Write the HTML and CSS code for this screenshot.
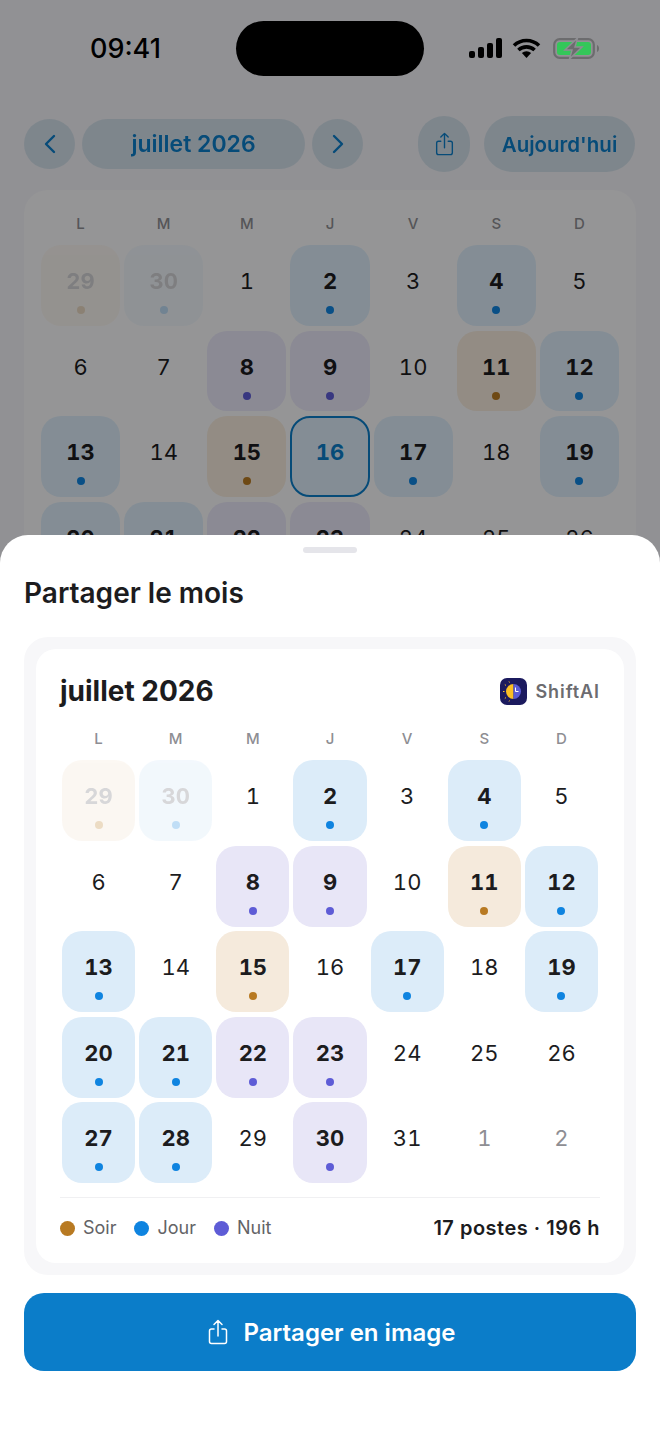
FILE: index.html
```html
<!DOCTYPE html>
<html lang="fr">
<head>
  <meta charset="UTF-8" />
  <title>ShiftAI – Partager le mois</title>
  <link rel="stylesheet" href="styles.css">
</head>
<body>
  <div class="screen">
    <header class="status-bar">
      <span class="status-time">09:41</span>
      <div class="island"></div>
      <div class="status-icons">
        <svg width="33" height="20" viewBox="0 0 33 20"><rect x="0" y="13" width="6" height="7" rx="2"/><rect x="9" y="9" width="6" height="11" rx="2"/><rect x="18" y="5" width="6" height="15" rx="2"/><rect x="27" y="0" width="6" height="20" rx="2"/></svg>
        <svg width="29" height="20" viewBox="0 0 29 20"><path d="M14.5 20l-4.6-5a6.6 6.6 0 0 1 9.2 0z"/><path d="M2 7.5a18 18 0 0 1 25 0M6.4 12a12 12 0 0 1 16.2 0" fill="none" stroke="#000" stroke-width="3.6"/></svg>
        <svg class="battery" width="46" height="21" viewBox="0 0 46 21"><rect x="1.2" y="1.2" width="39.6" height="18.6" rx="5.5" fill="none" stroke="#6c6c6e" stroke-width="2.2"/><rect x="4" y="4" width="34" height="13" rx="3" fill="#34c759"/><path d="M44 7v7c1.2-.4 2-1.800 2-3.500S45.200 7.400 44 7z" fill="#6c6c6e"/><path d="M24.500 0L12 12h7l-2.500 9L29 9h-7z" fill="#6c6c6e" stroke="#8e8e93" stroke-width="1.500"/></svg>
      </div>
    </header>

    <div class="toolbar">
      <button class="tool round"><svg width="14" height="20" viewBox="0 0 14 20"><path d="M11 2L3 10l8 8"/></svg></button>
      <button class="tool month">juillet 2026</button>
      <button class="tool round"><svg width="14" height="20" viewBox="0 0 14 20"><path d="M3 2l8 8-8 8"/></svg></button>
      <button class="tool round tall push"><svg width="20" height="26" viewBox="0 0 20 26"><path d="M6 10H3.500A2 2 0 0 0 1.500 12v10.500a2 2 0 0 0 2 2h13a2 2 0 0 0 2-2V12a2 2 0 0 0-2-2H14M10 17V2M6 5.500L10 1.500l4 4"/></svg></button>
      <button class="tool tall today">Aujourd'hui</button>
    </div>

    <section class="month-card">
      <div class="weekdays">
        <span>L</span><span>M</span><span>M</span><span>J</span><span>V</span><span>S</span><span>D</span>
      </div>
      <div class="days">
        <div class="day soir faded"><b>29</b><i></i></div>
        <div class="day jour faded"><b>30</b><i></i></div>
        <div class="day">1</div>
        <div class="day jour"><b>2</b><i></i></div>
        <div class="day">3</div>
        <div class="day jour"><b>4</b><i></i></div>
        <div class="day">5</div>
        <div class="day">6</div>
        <div class="day">7</div>
        <div class="day nuit"><b>8</b><i></i></div>
        <div class="day nuit"><b>9</b><i></i></div>
        <div class="day">10</div>
        <div class="day soir"><b>11</b><i></i></div>
        <div class="day jour"><b>12</b><i></i></div>
        <div class="day jour"><b>13</b><i></i></div>
        <div class="day">14</div>
        <div class="day soir"><b>15</b><i></i></div>
        <div class="day today-cell"><b>16</b></div>
        <div class="day jour"><b>17</b><i></i></div>
        <div class="day">18</div>
        <div class="day jour"><b>19</b><i></i></div>
        <div class="day jour"><b>20</b><i></i></div>
        <div class="day jour"><b>21</b><i></i></div>
        <div class="day nuit"><b>22</b><i></i></div>
        <div class="day nuit"><b>23</b><i></i></div>
        <div class="day">24</div>
        <div class="day">25</div>
        <div class="day">26</div>
      </div>
    </section>

    <div class="backdrop"></div>

    <section class="sheet">
      <div class="handle"></div>
      <h2 class="sheet-title">Partager le mois</h2>

      <div class="share-frame">
        <div class="share-card">
          <div class="share-head">
            <h3>juillet 2026</h3>
            <div class="brand">
              <svg class="brand-logo" width="27" height="27" viewBox="0 0 27 27">
                <rect width="27" height="27" rx="7" fill="#1b1a5e"/>
                <path d="M13.500 6a7.500 7.500 0 0 0 0 15z" fill="#fbbf24"/>
                <path d="M13.500 6a7.500 7.500 0 0 1 0 15z" fill="#5b5bd6"/>
                <path d="M15.500 9.500v4h3" fill="none" stroke="#fff" stroke-width="1"/>
                <path d="M4.500 13.500H3M6 7.500L4.800 6.500M6 19.500l-1.200 1M9.500 4.500L9 3.500M9.500 22.500L9 23.500" stroke="#fbbf24" stroke-width="1"/>
              </svg>
              <span>ShiftAI</span>
            </div>
          </div>

          <div class="weekdays">
            <span>L</span><span>M</span><span>M</span><span>J</span><span>V</span><span>S</span><span>D</span>
          </div>
          <div class="days">
            <div class="day soir faded"><b>29</b><i></i></div>
            <div class="day jour faded"><b>30</b><i></i></div>
            <div class="day">1</div>
            <div class="day jour"><b>2</b><i></i></div>
            <div class="day">3</div>
            <div class="day jour"><b>4</b><i></i></div>
            <div class="day">5</div>
            <div class="day">6</div>
            <div class="day">7</div>
            <div class="day nuit"><b>8</b><i></i></div>
            <div class="day nuit"><b>9</b><i></i></div>
            <div class="day">10</div>
            <div class="day soir"><b>11</b><i></i></div>
            <div class="day jour"><b>12</b><i></i></div>
            <div class="day jour"><b>13</b><i></i></div>
            <div class="day">14</div>
            <div class="day soir"><b>15</b><i></i></div>
            <div class="day">16</div>
            <div class="day jour"><b>17</b><i></i></div>
            <div class="day">18</div>
            <div class="day jour"><b>19</b><i></i></div>
            <div class="day jour"><b>20</b><i></i></div>
            <div class="day jour"><b>21</b><i></i></div>
            <div class="day nuit"><b>22</b><i></i></div>
            <div class="day nuit"><b>23</b><i></i></div>
            <div class="day">24</div>
            <div class="day">25</div>
            <div class="day">26</div>
            <div class="day jour"><b>27</b><i></i></div>
            <div class="day jour"><b>28</b><i></i></div>
            <div class="day">29</div>
            <div class="day nuit"><b>30</b><i></i></div>
            <div class="day">31</div>
            <div class="day other">1</div>
            <div class="day other">2</div>
          </div>

          <div class="share-foot">
            <div class="legend">
              <span class="key"><i class="soir"></i>Soir</span>
              <span class="key"><i class="jour"></i>Jour</span>
              <span class="key"><i class="nuit"></i>Nuit</span>
            </div>
            <strong>17 postes · 196 h</strong>
          </div>
        </div>
      </div>

      <button class="share-btn">
        <svg width="20" height="26" viewBox="0 0 20 26"><path d="M6 10H3.500A2 2 0 0 0 1.500 12v10.500a2 2 0 0 0 2 2h13a2 2 0 0 0 2-2V12a2 2 0 0 0-2-2H14M10 17V2M6 5.500L10 1.500l4 4"/></svg>
        Partager en image
      </button>
    </section>
  </div>
</body>
</html>
```

FILE: styles.css
```css
* { box-sizing: border-box; }
html, body { margin: 0; padding: 0; }
body {
  font-family: Inter, "Noto Sans", sans-serif;
  font-optical-sizing: none;
  color: #1c1c1e;
}
button { font: inherit; border: 0; padding: 0; }

.screen {
  position: relative;
  width: 660px;
  height: 1434px;
  overflow: hidden;
  background: #f2f2f7;
}

/* status bar, stays above the dimmed layer */
.status-bar {
  position: relative;
  z-index: 2;
  height: 116px;
  padding: 38px 61px 0 90px;
  display: flex;
  align-items: flex-start;
  justify-content: space-between;
}
.status-time {
  font-size: 27px;
  font-weight: 500;
  line-height: 22px;
  color: #000;
}
.status-icons {
  display: flex;
  align-items: flex-start;
  gap: 10px;
  margin-left: auto;
}
.battery { margin-left: 2px; }
.island {
  position: absolute;
  left: 236px;
  top: 21px;
  width: 188px;
  height: 55px;
  border-radius: 28px;
  background: #000;
}

/* page behind the sheet */
.toolbar {
  display: flex;
  align-items: center;
  gap: 7px;
  height: 56px;
  padding: 0 25px 0 24px;
  margin-bottom: 18px;
  filter: blur(0.5px);
}
.tool {
  height: 50px;
  border-radius: 25px;
  background: #d3e0ea;
  color: #0b7dc9;
  font-weight: 600;
  display: flex;
  align-items: center;
  justify-content: center;
}
.tool svg { fill: none; stroke: #0b7dc9; stroke-width: 2.4; stroke-linecap: round; stroke-linejoin: round; }
.tool.round { width: 51px; }
.tool.tall { height: 56px; border-radius: 28px; }
.tool.push { margin-left: auto; width: 52px; }
.tool.push svg { stroke-width: 1.500; width: 19px; height: 24px; }
.month { width: 223px; font-size: 23px; }
.today { width: 151px; font-size: 20.500px; margin-left: 7px; }

.month-card {
  margin: 0 24px;
  height: 500px;
  padding: 24px 17px;
  background: #f9f9fa;
  border-radius: 24px;
}
.weekdays {
  display: grid;
  grid-template-columns: repeat(7, 1fr);
  column-gap: 4px;
  text-align: center;
  font-size: 15px;
  font-weight: 500;
  line-height: 20px;
  color: #8e8e93;
}
.days {
  display: grid;
  grid-template-columns: repeat(7, 1fr);
  column-gap: 4px;
  row-gap: 5px;
  margin-top: 11px;
}
.day {
  position: relative;
  height: 80.500px;
  border-radius: 20px;
  padding-top: 21px;
  text-align: center;
  font-size: 22px;
  line-height: 30px;
  font-variant-numeric: tabular-nums;
  color: #1c1c1e;
}
.day b { font-weight: 700; }
.day i {
  position: absolute;
  left: 50%;
  top: 61px;
  width: 8px;
  height: 8px;
  margin-left: -4px;
  border-radius: 50%;
}
.day.jour { background: #dcecf9; }
.day.nuit { background: #e8e6f7; }
.day.soir { background: #f5eadc; }
.day.jour i, .key .jour { background: #0f84e0; }
.day.nuit i, .key .nuit { background: #5e5cd6; }
.day.soir i, .key .soir { background: #b87a22; }
.day.faded { opacity: 0.35; }
.day.faded b { color: #8e8e93; }
.day.faded i { opacity: 0.7; }
.day.other { color: #8e8e93; }
.today-cell {
  background: #dcecf9;
  border: 2.500px solid #0b7dc9;
  padding-top: 18.500px;
  color: #0b7dc9;
}

.backdrop {
  position: absolute;
  inset: 0;
  background: rgba(0, 0, 0, 0.4);
}

/* bottom sheet */
.sheet {
  position: absolute;
  z-index: 3;
  left: 0;
  right: 0;
  top: 535px;
  bottom: 0;
  padding: 12px 24px 0;
  background: #fff;
  border-radius: 28px 28px 0 0;
}
.handle {
  width: 54px;
  height: 6px;
  margin: 0 auto;
  border-radius: 3px;
  background: #e5e5ea;
}
.sheet-title {
  margin: 22px 0 26px;
  font-size: 28px;
  font-weight: 600;
  line-height: 36px;
  color: #1c1c1e;
}
.share-frame {
  padding: 12px;
  background: #f7f7f9;
  border-radius: 24px;
}
.share-card {
  height: 614px;
  padding: 24px 24px 0;
  background: #fff;
  border-radius: 20px;
}
.share-head {
  display: flex;
  align-items: center;
  justify-content: space-between;
  height: 36px;
  margin-bottom: 20px;
}
.share-head h3 {
  margin: 0;
  font-size: 28px;
  font-weight: 700;
  line-height: 36px;
  color: #1c1c1e;
}
.brand {
  display: flex;
  align-items: center;
  gap: 9px;
  font-size: 18px;
  font-weight: 600;
  letter-spacing: 0.9px;
  color: #6c6c70;
}
.share-card .weekdays { height: 20px; padding: 0 2px; }
.share-card .days {
  padding: 0 2px;
  row-gap: 4.500px;
  margin-top: 11px;
}
.share-card .day { height: 81px; }
.share-card .day i { top: 61px; }

.share-foot {
  display: flex;
  align-items: center;
  justify-content: space-between;
  margin-top: 14px;
  padding-top: 18px;
  border-top: 1px solid #f0f0f2;
}
.legend { display: flex; gap: 18px; }
.key {
  display: flex;
  align-items: center;
  gap: 8px;
  font-size: 18px;
  line-height: 24px;
  color: #636366;
}
.key i { width: 15px; height: 15px; border-radius: 50%; }
.share-foot strong { font-size: 20px; font-weight: 600; letter-spacing: 0.5px; color: #1c1c1e; }

.share-btn {
  display: flex;
  align-items: center;
  justify-content: center;
  gap: 16px;
  width: 100%;
  height: 78px;
  margin-top: 18px;
  padding-left: 3px;
  border-radius: 20px;
  background: #0b7dc9;
  color: #fff;
  font-size: 24px;
  font-weight: 600;
}
.share-btn svg { fill: none; stroke: #fff; stroke-width: 1.500; stroke-linecap: round; stroke-linejoin: round; }
```
